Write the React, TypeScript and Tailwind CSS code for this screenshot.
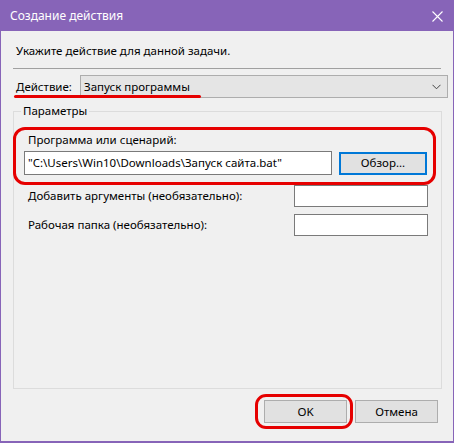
export default function App() {
  return (
    <div
      className="w-[454px] h-[443px] flex flex-col bg-[#f0f0f0] text-[11.5px] text-black overflow-hidden"
      style={{ fontFamily: "'Noto Sans', 'Open Sans', sans-serif" }}
    >
      {/* Title bar */}
      <div className="h-[31px] shrink-0 bg-[#8764b8] flex items-center justify-between pl-[10px] pr-[11px]">
        <span className="text-white text-[12px] leading-[16px]">Создание действия</span>
        <svg width="11" height="11" viewBox="0 0 11 11" className="mt-[1px]">
          <path d="M0.5 0.5 L10.5 10.5 M10.5 0.5 L0.5 10.5" stroke="#fff" strokeWidth="1.1" />
        </svg>
      </div>

      {/* Body */}
      <div className="flex-1 flex flex-col border-x border-b-2 border-[#8764b8] pl-[12px] relative">
        <div className="ml-[3px] mt-[12px] h-[16px] leading-[16px]">Укажите действие для данной задачи.</div>

        <div className="mt-[9px] w-[428px] h-px bg-[#a0a0a0]" />

        {/* Action row */}
        <div className="mt-[6px] flex items-center h-[23px]">
          <span className="ml-[3px] w-[64px] leading-[16px]">Действие:</span>
          <div className="w-[368px] h-[23px] border border-[#adadad] bg-[#e5e5e5] flex items-center justify-between pl-[3px] pr-[6px]">
            <span className="leading-[16px]">Запуск программы</span>
            <svg width="9" height="6" viewBox="0 0 9 6">
              <path d="M0.5 0.8 L4.5 4.8 L8.5 0.8" stroke="#444" strokeWidth="1" fill="none" />
            </svg>
          </div>
        </div>
        <div className="absolute left-[13px] top-[64px] w-[187px] h-[3px] rounded-full bg-[#e60000]" />

        {/* Group box */}
        <div className="relative mt-[13px] w-[429px] h-[278px] border border-[#dcdcdc] flex flex-col">
          <span className="absolute -top-[9px] left-[7px] px-[2px] bg-[#f0f0f0] leading-[16px]">Параметры</span>

          <div className="-ml-px mt-[15px] w-[423px] h-[58px] border-[3px] border-[#e60000] rounded-[12px] pl-[8px] pt-[2px] flex flex-col">
            <span className="ml-[4px] leading-[16px]">Программа или сценарий:</span>
            <div className="mt-[3px] flex items-center gap-[7px]">
              <div className="w-[308px] h-[24px] border border-[#7a7a7a] bg-white flex items-center pl-[3px] leading-[16px] whitespace-nowrap">
                "C:\Users\Win10\Downloads\Запуск сайта.bat"
              </div>
              <button className="w-[88px] h-[23px] border-2 border-[#0078d7] bg-[#e1e1e1] flex items-center justify-center leading-[16px]">
                Обзор...
              </button>
            </div>
          </div>

          <div className="flex items-center justify-between pl-[14px] pr-[13px]">
            <span className="leading-[16px]">Добавить аргументы (необязательно):</span>
            <div className="w-[134px] h-[22px] border border-[#7a7a7a] bg-white" />
          </div>
          <div className="mt-[7px] flex items-center justify-between pl-[14px] pr-[13px]">
            <span className="leading-[16px]">Рабочая папка (необязательно):</span>
            <div className="w-[134px] h-[22px] border border-[#7a7a7a] bg-white" />
          </div>
        </div>

        {/* Buttons */}
        <div className="mt-[11px] flex justify-end gap-[8px] pr-[15px]">
          <div className="relative">
            <button className="w-[83px] h-[23px] border border-[#adadad] bg-[#e1e1e1] leading-[16px]">OK</button>
            <div className="absolute -left-[9px] -top-[6px] w-[98px] h-[35px] border-[3px] border-[#e60000] rounded-[11px]" />
          </div>
          <button className="w-[83px] h-[23px] border border-[#adadad] bg-[#e1e1e1] leading-[16px]">Отмена</button>
        </div>
      </div>
    </div>
  );
}
